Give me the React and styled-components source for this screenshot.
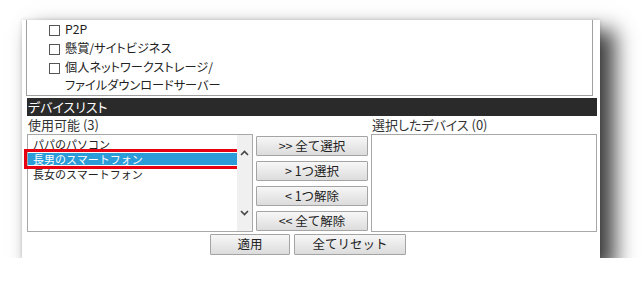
import React from 'react'
import styled, { createGlobalStyle } from 'styled-components'

const Global = createGlobalStyle`
body{
  margin: 0;
  background: #ffffff;
  font-family: 'Noto Sans CJK JP', 'Noto Sans', sans-serif;
}
`
const Card = styled.div`
width: 578px;
height: 238px;
margin: 20px 0 0 22px;
padding: 0 3px 4px 5px;
box-sizing: border-box;
background: #ffffff;
box-shadow: 13px 12px 20px 2px rgba(0,0,0,0.75), 0 0 4px rgba(0,0,0,0.15);
display: flex;
flex-direction: column;
`
const Panel = styled.div`
margin: 0 4px 0 -1px;
padding: 1px 0 1px 22px;
border: 1px solid #a0a0a0;
border-top: none;
display: flex;
flex-direction: column;
gap: 1.5px;
`
const Option = styled.label`
display: flex;
align-items: flex-start;
gap: 5px;
font-size: 12.2px;
line-height: 17.5px;
color: #222;
font-feature-settings: "palt";
span.box{
  flex: none;
  width: 9px;
  height: 9px;
  margin-top: 4px;
  border: 1px solid #555;
  background: #fff;
}
`
const Header = styled.div`
margin-top: 2px;
height: 18px;
line-height: 18px;
padding-left: 1px;
background: #2a2a2a;
color: #ffffff;
font-size: 13px;
font-feature-settings: "palt";
`
const Grid = styled.div`
display: grid;
grid-template-columns: 226px 112px 226px;
column-gap: 3px;
`
const Label = styled.div`
height: 18px;
line-height: 18px;
font-size: 13px;
color: #333;
font-feature-settings: "palt";
padding-left: ${p => p.$indent || 1}px;
`
const ListBox = styled.div`
height: 98px;
box-sizing: border-box;
border: 1px solid #a8a8a8;
background: #fff;
display: flex;
`
const Items = styled.div`
flex: 1;
padding-top: 3px;
display: flex;
flex-direction: column;
gap: 3px;
`
const Item = styled.div`
height: 12px;
line-height: 12px;
font-size: 11px;
padding-left: 5px;
color: ${p => p.$selected ? '#ffffff' : '#222'};
background: ${p => p.$selected ? '#2b9cd8' : 'transparent'};
outline: ${p => p.$selected ? '3px solid #e60012' : 'none'};
outline-offset: 1px;
`
const Track = styled.div`
width: 15px;
background: #f0f0f0;
display: flex;
flex-direction: column;
justify-content: space-between;
align-items: center;
padding: 15px 0 15px;
`
const Buttons = styled.div`
padding-top: 2px;
display: flex;
flex-direction: column;
gap: 5px;
`
const Button = styled.button`
width: ${p => p.$w ? p.$w + 'px' : '100%'};
height: ${p => p.$h || 20}px;
padding: 0;
border: 1px solid #a4a4a4;
border-radius: 1px;
background: linear-gradient(#f7f7f7, #dcdcdc);
font-family: 'Noto Sans CJK JP', sans-serif;
font-size: 12.5px;
color: #222;
line-height: 1;
`
const Footer = styled.div`
margin-top: 2px;
padding-right: 8px;
display: flex;
justify-content: center;
gap: 4px;
`

const Chevron = ({ up }) => (
  <svg width="9" height="6" viewBox="0 0 9 6">
    <path d={up ? 'M1 5 L4.5 1.5 L8 5' : 'M1 1 L4.5 4.5 L8 1'} fill="none" stroke="#444" strokeWidth="1.6" />
  </svg>
)

export default function App() {
  return (
    <>
      <Global />
      <Card>
        <Panel>
          <Option><span className="box" />P2P</Option>
          <Option><span className="box" />懸賞/サイトビジネス</Option>
          <Option><span className="box" />個人ネットワークストレージ/<br />ファイルダウンロードサーバー</Option>
        </Panel>
        <Header>デバイスリスト</Header>
        <Grid>
          <Label>使用可能 (3)</Label>
          <div />
          <Label $indent={0}>選択したデバイス (0)</Label>
          <ListBox>
            <Items>
              <Item>パパのパソコン</Item>
              <Item $selected>長男のスマートフォン</Item>
              <Item>長女のスマートフォン</Item>
            </Items>
            <Track>
              <Chevron up />
              <Chevron />
            </Track>
          </ListBox>
          <Buttons>
            <Button>&gt;&gt; 全て選択</Button>
            <Button>&gt; 1つ選択</Button>
            <Button>&lt; 1つ解除</Button>
            <Button>&lt;&lt; 全て解除</Button>
          </Buttons>
          <ListBox />
        </Grid>
        <Footer>
          <Button $w={80} $h={21}>適用</Button>
          <Button $w={112} $h={21}>全てリセット</Button>
        </Footer>
      </Card>
    </>
  )
}
